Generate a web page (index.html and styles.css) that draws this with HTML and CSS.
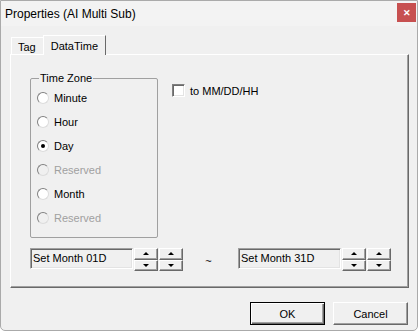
FILE: index.html
```html
<!DOCTYPE html>
<html lang="en">
<head>
    <meta charset="UTF-8">
    <title>Properties (AI Multi Sub)</title>
    <link rel="stylesheet" href="styles.css">
</head>
<body>
    <div class="window">
        <div class="titlebar">
            <span class="title">Properties (AI Multi Sub)</span>
            <span class="close">&#x2715;</span>
        </div>
        <div class="client">
            <div class="tabs">
                <div class="tab">Tag</div>
                <div class="tab active">DataTime</div>
            </div>
            <div class="panel">
                <div class="top-row">
                    <fieldset class="group">
                        <legend>Time Zone</legend>
                        <label class="radio"><span class="dot"></span>Minute</label>
                        <label class="radio"><span class="dot"></span>Hour</label>
                        <label class="radio"><span class="dot checked"></span>Day</label>
                        <label class="radio disabled"><span class="dot"></span>Reserved</label>
                        <label class="radio"><span class="dot"></span>Month</label>
                        <label class="radio disabled"><span class="dot"></span>Reserved</label>
                    </fieldset>
                    <label class="check"><span class="box"></span>to MM/DD/HH</label>
                </div>
                <div class="range-row">
                    <div class="field">
                        <div class="edit">Set Month 01D</div>
                        <div class="spin"><span class="up"></span><span class="down"></span></div>
                        <div class="spin"><span class="up"></span><span class="down"></span></div>
                    </div>
                    <span class="tilde">~</span>
                    <div class="field">
                        <div class="edit">Set Month 31D</div>
                        <div class="spin"><span class="up"></span><span class="down"></span></div>
                        <div class="spin"><span class="up"></span><span class="down"></span></div>
                    </div>
                </div>
            </div>
            <div class="buttons">
                <button class="btn default">OK</button>
                <button class="btn">Cancel</button>
            </div>
        </div>
    </div>
</body>
</html>
```

FILE: styles.css
```css
* {
    box-sizing: border-box;
}
body {
    margin: 0;
    background: #ffffff;
    font-family: "Liberation Sans", Arial, sans-serif;
    font-size: 11px;
    color: #000000;
}
.window {
    width: 418px;
    height: 331px;
    background: #f0f0f0;
    border: 1px solid #aaaaaa;
    border-radius: 0 0 5px 5px;
    display: flex;
    flex-direction: column;
}
.titlebar {
    height: 25px;
    background: #f3f3f3;
    display: flex;
    align-items: flex-start;
    justify-content: space-between;
}
.title {
    font-size: 12px;
    margin: 6px 0 0 4px;
}
.close {
    width: 19px;
    height: 19px;
    margin: 2px 1px 0 0;
    background: #c75050;
    color: #ffffff;
    font-size: 9px;
    font-weight: bold;
    display: flex;
    align-items: center;
    justify-content: center;
}
.client {
    flex: 1;
    padding: 9px 9px 0 9px;
    display: flex;
    flex-direction: column;
}
.tabs {
    display: flex;
    align-items: flex-end;
    height: 19px;
    padding-left: 1px;
}
.tab {
    height: 17px;
    padding: 3px 7px 0 6px;
    border: 1px solid;
    border-color: #ffffff #a0a0a0 transparent #ffffff;
    border-bottom: none;
}
.tab.active {
    height: 20px;
    padding: 4px 7px 0 7px;
    margin-left: -1px;
    border-right: 1px solid #696969;
    position: relative;
    top: 1px;
    background: #f0f0f0;
}
.panel {
    width: 399px;
    height: 234px;
    border: 1px solid;
    border-color: #ffffff #696969 #696969 #ffffff;
    box-shadow: inset -1px -1px 0 #a0a0a0;
    padding: 17px 0 0 19px;
}
.top-row {
    display: flex;
    align-items: flex-start;
}
.group {
    width: 128px;
    height: 166px;
    margin: 0;
    padding: 7px 0 0 6px;
    border: 1px solid #a0a0a0;
    border-radius: 2px;
    display: flex;
    flex-direction: column;
    gap: 11px;
}
.group legend {
    padding: 0 1px;
    margin-left: 2px;
    font-size: 11px;
}
.radio {
    display: flex;
    align-items: center;
    height: 13px;
}
.radio.disabled {
    color: #a0a0a0;
}
.dot {
    width: 12px;
    height: 12px;
    border-radius: 50%;
    border: 1px solid;
    border-color: #808080 #dcdcdc #dcdcdc #808080;
    background: #ffffff;
    margin-right: 5px;
    display: flex;
    align-items: center;
    justify-content: center;
}
.disabled .dot {
    background: #f0f0f0;
}
.dot.checked::after {
    content: "";
    width: 4px;
    height: 4px;
    border-radius: 50%;
    background: #000000;
}
.check {
    display: flex;
    align-items: center;
    margin: 12px 0 0 14px;
}
.box {
    width: 13px;
    height: 13px;
    border: 1px solid;
    border-color: #808080 #ffffff #ffffff #808080;
    box-shadow: inset 1px 1px 0 #696969, inset -1px -1px 0 #e3e3e3;
    background: #ffffff;
    margin-right: 5px;
}
.range-row {
    display: flex;
    align-items: center;
    margin-top: 10px;
}
.field {
    display: flex;
    align-items: flex-start;
}
.edit {
    width: 103px;
    height: 21px;
    padding: 3px 0 0 2px;
    border: 1px solid;
    border-color: #a0a0a0 #ffffff #ffffff #a0a0a0;
    box-shadow: inset 1px 1px 0 #696969, inset -1px -1px 0 #e3e3e3;
}
.spin {
    width: 24px;
    height: 23px;
    margin-left: 1px;
    display: flex;
    flex-direction: column;
}
.spin span {
    flex: 1;
    border: 1px solid;
    border-color: #ffffff #696969 #696969 #ffffff;
    box-shadow: inset -1px -1px 0 #a0a0a0;
    display: flex;
    align-items: center;
    justify-content: center;
}
.spin .up::after {
    content: "";
    border-left: 3px solid transparent;
    border-right: 3px solid transparent;
    border-bottom: 3px solid #000000;
}
.spin .down::after {
    content: "";
    border-left: 3px solid transparent;
    border-right: 3px solid transparent;
    border-top: 3px solid #000000;
}
.tilde {
    width: 55px;
    text-align: center;
    padding: 2px 4px 0 0;
}
.buttons {
    display: flex;
    justify-content: flex-end;
    gap: 8px;
    margin-top: 14px;
    padding-right: 0;
}
.btn {
    width: 75px;
    height: 23px;
    font-family: "Liberation Sans", Arial, sans-serif;
    font-size: 11px;
    background: #f0f0f0;
    border: 1px solid;
    border-color: #ffffff #696969 #696969 #ffffff;
    box-shadow: inset -1px -1px 0 #a0a0a0;
    padding: 0;
}
.btn.default {
    border: 1px solid #000000;
    box-shadow: inset 1px 1px 0 #ffffff, inset -1px -1px 0 #696969, inset -2px -2px 0 #a0a0a0;
}
```
